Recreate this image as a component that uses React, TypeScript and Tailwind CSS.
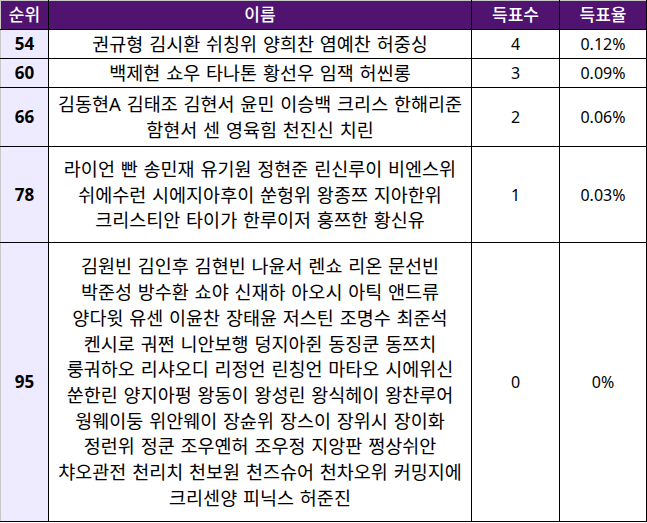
import React from "react";

type Row = { rank: string; names: string[]; votes: string; pct: string; h: string };

const rows: Row[] = [
  { rank: "54", names: ["권규형 김시환 쉬칭위 양희찬 염예찬 허중싱"], votes: "4", pct: "0.12%", h: "h-[29px]" },
  { rank: "60", names: ["백제현 쇼우 타나톤 황선우 임잭 허씬롱"], votes: "3", pct: "0.09%", h: "h-[29px]" },
  {
    rank: "66",
    names: ["김동현A 김태조 김현서 윤민 이승백 크리스 한해리준", "함현서 센 영육힘 천진신 치린"],
    votes: "2",
    pct: "0.06%",
    h: "h-[59px]",
  },
  {
    rank: "78",
    names: [
      "라이언 빤 송민재 유기원 정현준 린신루이 비엔스위",
      "쉬에수런 시에지아후이 쑨헝위 왕종쯔 지아한위",
      "크리스티안 타이가 한루이저 훙쯔한 황신유",
    ],
    votes: "1",
    pct: "0.03%",
    h: "h-[96px]",
  },
  {
    rank: "95",
    names: [
      "김원빈 김인후 김현빈 나윤서 렌쇼 리온 문선빈",
      "박준성 방수환 쇼야 신재하 아오시 아틱 앤드류",
      "양다윗 유센 이윤찬 장태윤 저스틴 조명수 최준석",
      "켄시로 궈쩐 니안보행 덩지아쥔 동징쿤 동쯔치",
      "룽궈하오 리샤오디 리정언 린칭언 마타오 시에위신",
      "쑨한린 양지아펑 왕동이 왕성린 왕식헤이 왕찬루어",
      "웡웨이둥 위안웨이 장슌위 장스이 장위시 장이화",
      "정런위 정쿤 조우옌허 조우정 지앙판 쩡상쉬안",
      "챠오관전 천리치 천보원 천즈슈어 천차오위 커밍지에",
      "크리센양 피닉스 허준진",
    ],
    votes: "0",
    pct: "0%",
    h: "h-[279px]",
  },
];

export default function App() {
  return (
    <div
      className="w-[647px] h-[523px] bg-white text-black"
      style={{ fontFamily: '"Noto Sans", "Noto Sans CJK KR", sans-serif' }}
    >
      <table className="w-[646px] border-collapse table-fixed border-t border-l border-t-[#c8c8c8] border-l-[#c8c8c8]">
        <colgroup>
          <col className="w-[48px]" />
          <col className="w-[423px]" />
          <col className="w-[88px]" />
          <col className="w-[87px]" />
        </colgroup>
        <thead>
          <tr className="h-[29px] bg-[#501470] text-white text-[17px] font-medium">
            <th className="border border-black border-t-[#c8c8c8] border-l-[#c8c8c8] p-0 font-medium">순위</th>
            <th className="border border-black border-t-[#c8c8c8] p-0 font-medium">이름</th>
            <th className="border border-black border-t-[#c8c8c8] p-0 font-medium">득표수</th>
            <th className="border border-black border-t-[#c8c8c8] p-0 font-medium">득표율</th>
          </tr>
        </thead>
        <tbody>
          {rows.map((r) => (
            <tr key={r.rank} className={r.h}>
              <td className="border border-black border-l-[#c8c8c8] bg-[#eeeaff] p-0 text-center text-[17px] font-bold">
                {r.rank}
              </td>
              <td className="border border-black p-0 text-center text-[18.5px] leading-[25.7px] [word-spacing:1px]">
                {r.names.map((n, i) => (
                  <div key={i}>{n}</div>
                ))}
              </td>
              <td className="border border-black p-0 text-center text-[16px]">{r.votes}</td>
              <td className="border border-black p-0 text-center text-[16px]">{r.pct}</td>
            </tr>
          ))}
        </tbody>
      </table>
    </div>
  );
}
